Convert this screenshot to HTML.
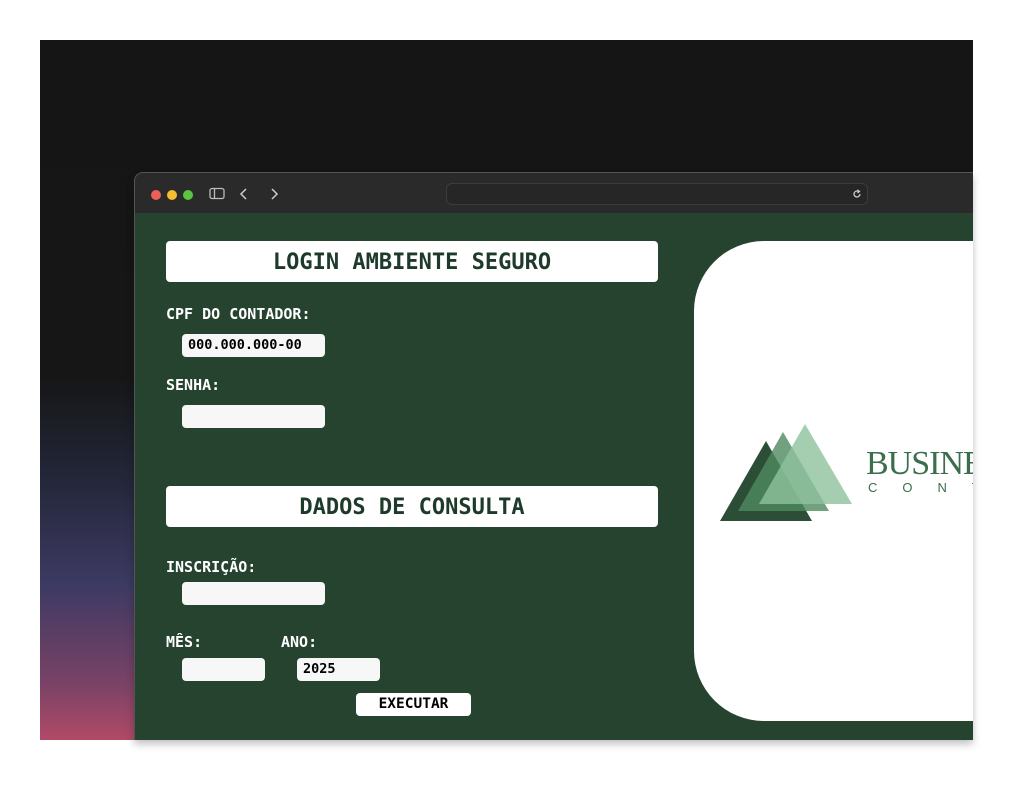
<!DOCTYPE html>
<html><head><meta charset="utf-8"><style>
*{margin:0;padding:0;box-sizing:border-box}
body{width:1033px;height:800px;background:#fff;position:relative;overflow:hidden;font-family:"DejaVu Sans Mono","Liberation Mono",monospace}
.bg{position:absolute;left:40px;top:40px;width:933px;height:700px;background:linear-gradient(180deg,#151515 0%,#161616 48%,#222637 62%,#3d3a63 78%,#7a4266 92%,#b04a66 100%)}
.bg2{position:absolute;left:40px;top:40px;width:933px;height:700px;background:linear-gradient(90deg,rgba(21,21,21,0) 0%,rgba(21,21,21,0) 10%,#151515 30%)}
.win{position:absolute;left:134px;top:172px;width:839px;height:568px;background:#264330;border-radius:9px 0 0 0;overflow:hidden;border-left:1px solid #555;border-top:1px solid #555;box-shadow:0 4px 8px rgba(0,0,0,.25)}
.tb{position:absolute;left:0;top:0;width:100%;height:40px;background:#2a2a2a}
.dot{position:absolute;top:17px;width:10px;height:10px;border-radius:50%}
.url{position:absolute;left:311px;top:10px;width:422px;height:22px;border:1px solid #3c3c3c;border-radius:6px;background:#262626}
.hdr{position:absolute;left:31px;width:492px;height:41px;background:#fff;border-radius:4px;color:#1e3a2a;font-weight:bold;font-size:22px;text-align:center;line-height:43px}
.lbl{position:absolute;color:#fff;font-weight:bold;font-size:15px}
.inp{position:absolute;height:23px;background:#f7f7f7;border-radius:4px;font-weight:bold;font-size:13.5px;line-height:23px;padding-left:6px;color:#000}
.card{position:absolute;left:559px;top:68px;width:400px;height:480px;background:#fff;border-radius:70px}
</style></head><body>
<div class="bg"></div><div class="bg2"></div>
<div class="win">
<div class="tb">
<div class="dot" style="left:16px;background:#ee5f57"></div>
<div class="dot" style="left:32px;background:#f5bd2f"></div>
<div class="dot" style="left:48px;background:#5ac53f"></div>
<svg style="position:absolute;left:74px;top:14px" width="16" height="13"><rect x="1" y="1.5" width="14" height="10" rx="2" fill="none" stroke="#bbb" stroke-width="1.3"/><line x1="5.5" y1="2" x2="5.5" y2="11" stroke="#bbb" stroke-width="1.3"/></svg>
<svg style="position:absolute;left:104px;top:14px" width="10" height="14"><path d="M7 2L2 7L7 12" fill="none" stroke="#ccc" stroke-width="1.5"/></svg>
<svg style="position:absolute;left:134px;top:14px" width="10" height="14"><path d="M3 2L8 7L3 12" fill="none" stroke="#ccc" stroke-width="1.5"/></svg>
<div class="url"><svg style="position:absolute;right:5px;top:5px" width="10" height="10"><path d="M8 5A3 3 0 1 1 6.5 2.4" fill="none" stroke="#ccc" stroke-width="1.3"/><path d="M5.5 0.8L7.5 2.5L5.5 4" fill="none" stroke="#ccc" stroke-width="1.2"/></svg></div>
</div>
<div class="hdr" style="top:68px">LOGIN AMBIENTE SEGURO</div>
<div class="lbl" style="left:31px;top:132px">CPF DO CONTADOR:</div>
<div class="inp" style="left:47px;top:161px;width:143px">000.000.000-00</div>
<div class="lbl" style="left:31px;top:203px">SENHA:</div>
<div class="inp" style="left:47px;top:232px;width:143px"></div>
<div class="hdr" style="top:313px">DADOS DE CONSULTA</div>
<div class="lbl" style="left:31px;top:385px">INSCRIÇÃO:</div>
<div class="inp" style="left:47px;top:409px;width:143px"></div>
<div class="lbl" style="left:31px;top:460px">MÊS:</div>
<div class="lbl" style="left:146px;top:460px">ANO:</div>
<div class="inp" style="left:47px;top:485px;width:83px"></div>
<div class="inp" style="left:162px;top:485px;width:83px;padding-left:6px">2025</div>
<div class="inp" style="left:221px;top:520px;width:115px;background:#fff;text-align:center;padding:0;font-size:14.5px">EXECUTAR</div>
<div class="card">
<svg width="400" height="480" style="position:absolute;left:0;top:0">
<polygon points="72,200 26,280 118,280" fill="#2c4d36"/>
<polygon points="89,191 44,270 135,270" fill="#4f8a60" opacity="0.8"/>
<polygon points="111,183 65,263 158,263" fill="#8fc29e" opacity="0.8"/>
<text x="172" y="233" font-family="Liberation Serif,serif" font-size="34" fill="#3b6e4c" letter-spacing="-1">BUSINESS</text>
<text x="174" y="251" font-family="Liberation Sans,sans-serif" font-size="13" fill="#3b6e4c" letter-spacing="25">CONTABIL</text>
</svg>
</div>
</div>
</body></html>
